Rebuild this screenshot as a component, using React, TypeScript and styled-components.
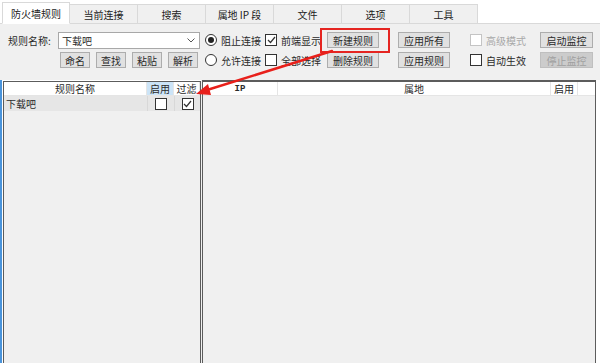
import styled, { createGlobalStyle } from "styled-components";

const Global = createGlobalStyle`
  html, body { margin: 0; padding: 0; background: #f0f0f0; }
  * { box-sizing: border-box; }
`;

const font = `"Noto Sans CJK SC", "Noto Sans", sans-serif`;

const Window = styled.div`
  position: relative;
  width: 600px;
  height: 363px;
  overflow: hidden;
  background: #f0f0f0;
  font-family: ${font};
  font-size: 10px;
  color: #2a2a2a;
  display: flex;
  flex-direction: column;
`;

const TabBar = styled.div`
  display: flex;
  align-items: flex-end;
  height: 24px;
  padding-left: 2px;
  background: #ffffff;
  border-bottom: 1px solid #d9d9d9;
`;

const Tab = styled.div<{ active?: boolean }>`
  width: 68px;
  height: ${({ active }) => (active ? "22px" : "20px")};
  margin-bottom: -1px;
  display: flex;
  align-items: center;
  justify-content: center;
  background: ${({ active }) => (active ? "#ffffff" : "#f0f0f0")};
  border: 1px solid #d9d9d9;
  border-left: ${({ active }) => (active ? "1px solid #d9d9d9" : "none")};
  border-bottom: ${({ active }) => (active ? "1px solid #ffffff" : "1px solid #d9d9d9")};
  color: #222;
  padding-top: 1px;
`;

const Toolbar = styled.div`
  display: grid;
  grid-template-columns: 50px 147px 60px 60px 73px 72px 70px 53px;
  grid-template-rows: 16px 16px;
  row-gap: 4px;
  padding: 8px 0 0 8px;
  height: 54px;
  align-items: center;
`;

const Label = styled.span`
  white-space: nowrap;
`;

const Combo = styled.div`
  width: 142px;
  height: 17px;
  background: #fff;
  border: 1px solid #a8a8a8;
  display: flex;
  align-items: center;
  justify-content: space-between;
  padding: 0 4px 0 3px;
`;

const Chevron = styled.svg`
  width: 8px;
  height: 5px;
`;

const SmallButtons = styled.div`
  grid-column: 1 / span 2;
  display: flex;
  gap: 6px;
  padding-left: 52px;
`;

const Button = styled.div<{ w?: number; disabled?: boolean }>`
  width: ${({ w }) => w ?? 52}px;
  height: 16px;
  display: flex;
  align-items: center;
  justify-content: center;
  background: ${({ disabled }) => (disabled ? "#cccccc" : "#e1e1e1")};
  border: 1px solid ${({ disabled }) => (disabled ? "#bfbfbf" : "#adadad")};
  color: ${({ disabled }) => (disabled ? "#a0a0a0" : "#2a2a2a")};
  white-space: nowrap;
`;

const ButtonCell = styled.div`
  padding-left: 2px;
`;

const Option = styled.label<{ disabled?: boolean }>`
  display: flex;
  align-items: center;
  gap: 4px;
  white-space: nowrap;
  color: ${({ disabled }) => (disabled ? "#a8a8a8" : "#2a2a2a")};
`;

const Radio = styled.span<{ on?: boolean }>`
  width: 12px;
  height: 12px;
  border-radius: 50%;
  border: 1px solid #333;
  background: #fff;
  display: flex;
  align-items: center;
  justify-content: center;
  &::after {
    content: "";
    width: 6px;
    height: 6px;
    border-radius: 50%;
    background: ${({ on }) => (on ? "#222" : "transparent")};
  }
`;

const Box = styled.span<{ disabled?: boolean }>`
  width: 12px;
  height: 12px;
  border: 1px solid ${({ disabled }) => (disabled ? "#c4c4c4" : "#333")};
  background: #fff;
  display: flex;
  align-items: center;
  justify-content: center;
`;

const Tick = () => (
  <svg width="9" height="8" viewBox="0 0 9 8">
    <path d="M1 4 L3.5 6.5 L8 1" fill="none" stroke="#333" strokeWidth="1.2" />
  </svg>
);

const Check = ({ on, disabled }: { on?: boolean; disabled?: boolean }) => (
  <Box disabled={disabled}>{on && <Tick />}</Box>
);

const Panes = styled.div`
  flex: 1;
  display: flex;
  margin-top: 2px;
`;

const LeftPane = styled.div`
  width: 201px;
  display: flex;
  border-left: 2px solid #4a94db;
  padding-left: 1px;
  background: #fff;
  padding-top: 1px;
`;

const ListBox = styled.div<{ thick?: boolean }>`
  flex: 1;
  display: flex;
  flex-direction: column;
  background: #f0f0f0;
  border: 1px solid #5c5c5c;
  border-top-width: ${({ thick }) => (thick ? 2 : 1)}px;
  border-bottom: none;
`;

const RightPane = styled.div`
  flex: 1;
  display: flex;
  margin-left: 1px;
  background: #fff;
  padding-right: 4px;
`;

const HeaderRow = styled.div`
  display: flex;
  height: 14px;
  background: #fff;
  border-bottom: 1px solid #e5e5e5;
`;

const HeaderCell = styled.div<{ w?: number; hl?: boolean; mono?: boolean }>`
  ${({ w }) => (w ? `width: ${w}px;` : "flex: 1;")}
  display: flex;
  align-items: center;
  justify-content: center;
  background: ${({ hl }) => (hl ? "#cce4f7" : "#fff")};
  border-right: 1px solid #e5e5e5;
  font-family: ${({ mono }) => (mono ? `"Liberation Mono", monospace` : font)};
  font-size: ${({ mono }) => (mono ? "9px" : "10px")};
  font-weight: ${({ mono }) => (mono ? 700 : 400)};
`;

const Row = styled.div`
  display: flex;
  height: 15px;
  background: #e6e6e6;
`;

const NameCell = styled.div`
  flex: 1;
  padding-left: 2px;
  display: flex;
  align-items: center;
`;

const CheckCell = styled.div<{ w: number }>`
  width: ${({ w }) => w}px;
  display: flex;
  align-items: center;
  justify-content: center;
  border-left: 1px solid #d8d8d8;
`;

const Highlight = styled.div`
  position: absolute;
  left: 320px;
  top: 28px;
  width: 70px;
  height: 25px;
  border: 2px solid #e52521;
  pointer-events: none;
`;

const Overlay = styled.svg`
  position: absolute;
  left: 0;
  top: 0;
  pointer-events: none;
`;

const tabs = ["防火墙规则", "当前连接", "搜索", "属地 IP 段", "文件", "选项", "工具"];

export default function App() {
  return (
    <Window>
      <Global />
      <TabBar>
        {tabs.map((t, i) => (
          <Tab key={t} active={i === 0}>{t}</Tab>
        ))}
      </TabBar>

      <Toolbar>
        <Label>规则名称:</Label>
        <Combo>
          <span>下载吧</span>
          <Chevron viewBox="0 0 8 5">
            <path d="M0.5 0.5 L4 4 L7.5 0.5" fill="none" stroke="#555" strokeWidth="1" />
          </Chevron>
        </Combo>
        <Option><Radio on />阻止连接</Option>
        <Option><Check on />前端显示</Option>
        <ButtonCell><Button>新建规则</Button></ButtonCell>
        <Button>应用所有</Button>
        <Option disabled><Check disabled />高级模式</Option>
        <Button w={53}>启动监控</Button>

        <SmallButtons>
          <Button w={30}>命名</Button>
          <Button w={30}>查找</Button>
          <Button w={30}>粘贴</Button>
          <Button w={30}>解析</Button>
        </SmallButtons>
        <Option><Radio />允许连接</Option>
        <Option><Check />全部选择</Option>
        <ButtonCell><Button>删除规则</Button></ButtonCell>
        <Button>应用规则</Button>
        <Option><Check />自动生效</Option>
        <Button w={53} disabled>停止监控</Button>
      </Toolbar>

      <Panes>
        <LeftPane>
          <ListBox>
            <HeaderRow>
              <HeaderCell>规则名称</HeaderCell>
              <HeaderCell w={27} hl>启用</HeaderCell>
              <HeaderCell w={26}>过滤</HeaderCell>
            </HeaderRow>
            <Row>
              <NameCell>下载吧</NameCell>
              <CheckCell w={27}><Check /></CheckCell>
              <CheckCell w={26}><Check on /></CheckCell>
            </Row>
          </ListBox>
        </LeftPane>
        <RightPane>
          <ListBox thick>
            <HeaderRow>
              <HeaderCell w={75} mono>IP</HeaderCell>
              <HeaderCell w={273}>属地</HeaderCell>
              <HeaderCell w={27}>启用</HeaderCell>
              <HeaderCell style={{ borderRight: "none" }} />
            </HeaderRow>
          </ListBox>
        </RightPane>
      </Panes>

      <Highlight />
      <Overlay width="600" height="363" viewBox="0 0 600 363">
        <line x1="332" y1="51" x2="207" y2="90" stroke="#e8201b" strokeWidth="2.5" strokeLinecap="round" />
        <polygon points="196,94 211,95 208,84" fill="#e8201b" />
      </Overlay>
    </Window>
  );
}
